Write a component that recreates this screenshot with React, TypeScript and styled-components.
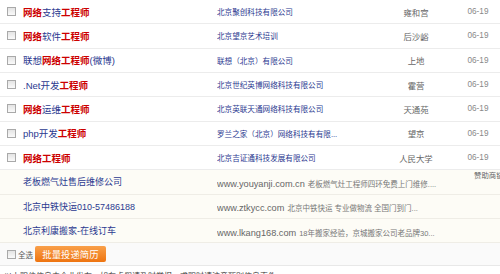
import React from 'react';
import styled, { createGlobalStyle } from 'styled-components';

type Part = { text: string; hot?: boolean };
type Job = { title: Part[]; company: string; area: string; date: string };
type Ad = { name: string; url: string; desc: string };

const jobs: Job[] = [
  { title: [{ text: '网络', hot: true }, { text: '支持' }, { text: '工程师', hot: true }], company: '北京聚创科技有限公司', area: '雍和宫', date: '06-19' },
  { title: [{ text: '网络', hot: true }, { text: '软件' }, { text: '工程师', hot: true }], company: '北京望京艺术培训', area: '后沙峪', date: '06-19' },
  { title: [{ text: '联想' }, { text: '网络工程师', hot: true }, { text: '(微博)' }], company: '联想（北京）有限公司', area: '上地', date: '06-19' },
  { title: [{ text: '.Net开发' }, { text: '工程师', hot: true }], company: '北京世纪英博网络科技有限公司', area: '霍营', date: '06-19' },
  { title: [{ text: '网络', hot: true }, { text: '运维' }, { text: '工程师', hot: true }], company: '北京英联天通网络科技有限公司', area: '天通苑', date: '06-19' },
  { title: [{ text: 'php开发' }, { text: '工程师', hot: true }], company: '罗兰之家（北京）网络科技有有限...', area: '望京', date: '06-19' },
  { title: [{ text: '网络工程师', hot: true }], company: '北京吉证通科技发展有限公司', area: '人民大学', date: '06-19' },
];

const ads: Ad[] = [
  { name: '老板燃气灶售后维修公司', url: 'www.youyanji.com.cn', desc: '老板燃气灶工程师四环免费上门维修....' },
  { name: '北京中铁快运010-57486188', url: 'www.ztkycc.com', desc: '北京中铁快运 专业做物流 全国门到门...' },
  { name: '北京利康搬家-在线订车', url: 'www.lkang168.com', desc: '18年搬家经验，京城搬家公司老品牌30...' },
];

const GlobalStyle = createGlobalStyle`
  html, body {
    margin: 0;
    padding: 0;
    background: #ffffff;
    overflow: hidden;
  }
  body {
    font-family: "Liberation Sans", "Noto Sans CJK SC", sans-serif;
  }
`;

const Page = styled.div`
  width: 500px;
  height: 274px;
  overflow: hidden;
`;

const JobRow = styled.div`
  display: grid;
  grid-template-columns: 23px 194px 160px 78px 45px;
  align-items: center;
  height: 23.33px;
  border-bottom: 1px solid #ececec;
`;

const Box = styled.span<{ $size: number }>`
  display: block;
  width: ${({ $size }) => $size}px;
  height: ${({ $size }) => $size}px;
  box-sizing: border-box;
  margin-left: 7px;
  border: 1px solid #a9a9a9;
  background: linear-gradient(#e4e4e4, #fafafa);
`;

const Title = styled.a`
  font-size: 9.5px;
  color: #2b3990;
  text-decoration: none;
  white-space: nowrap;
`;

const Hot = styled.span`
  color: #cc0000;
  font-weight: bold;
`;

const Company = styled.span`
  font-size: 7.6px;
  color: #2b3990;
  white-space: nowrap;
  overflow: hidden;
`;

const Area = styled.span`
  font-size: 8.4px;
  color: #666666;
  text-align: center;
`;

const Date = styled.span`
  font-size: 8.2px;
  color: #888888;
  text-align: center;
  padding-left: 1px;
`;

const AdList = styled.div`
  position: relative;
  background: #fdfcf6;
`;

const AdRow = styled.div`
  display: grid;
  grid-template-columns: 23px 194px 1fr;
  align-items: center;
  height: 23.33px;
  border-bottom: 1px solid #efede6;
`;

const AdName = styled.span`
  grid-column: 2;
  font-size: 9px;
  color: #2b3990;
  white-space: nowrap;
`;

const AdText = styled.span`
  white-space: nowrap;
  overflow: hidden;
`;

const AdUrl = styled.span`
  font-size: 9.2px;
  color: #666666;
  margin-right: 3px;
`;

const AdDesc = styled.span`
  font-size: 7.5px;
  color: #777777;
`;

const Sponsor = styled.span`
  position: absolute;
  top: -1px;
  left: 474px;
  font-size: 7.4px;
  color: #666666;
  white-space: nowrap;
`;

const Toolbar = styled.div`
  display: flex;
  align-items: center;
  height: 22px;
  background: #fafafa;
  border-bottom: 1px solid #e8e8e8;
`;

const SelectAll = styled.label`
  display: flex;
  align-items: center;
  gap: 2px;
  font-size: 7.5px;
  color: #555555;
`;

const Button = styled.button`
  margin-left: 2px;
  width: 71px;
  height: 16px;
  padding: 0;
  border: 0;
  border-radius: 2px;
  background: linear-gradient(#f9a04a, #ee7410);
  color: #ffffff;
  font-family: "Noto Sans CJK SC", sans-serif;
  font-size: 9.4px;
  line-height: 16px;
  cursor: pointer;
`;

const Note = styled.div`
  padding: 4px 0 0 4px;
  font-size: 8px;
  color: #333333;
  white-space: nowrap;
`;

export default function App() {
  return (
    <Page>
      <GlobalStyle />
      {jobs.map((job, i) => (
        <JobRow key={i}>
          <Box $size={9} />
          <Title href="#">
            {job.title.map((p, j) => (p.hot ? <Hot key={j}>{p.text}</Hot> : <span key={j}>{p.text}</span>))}
          </Title>
          <Company>{job.company}</Company>
          <Area>{job.area}</Area>
          <Date>{job.date}</Date>
        </JobRow>
      ))}
      <AdList>
        <Sponsor>赞助商链接</Sponsor>
        {ads.map((ad, i) => (
          <AdRow key={i}>
            <AdName>{ad.name}</AdName>
            <AdText>
              <AdUrl>{ad.url}</AdUrl>
              <AdDesc>{ad.desc}</AdDesc>
            </AdText>
          </AdRow>
        ))}
      </AdList>
      <Toolbar>
        <SelectAll>
          <Box $size={9} />
          全选
        </SelectAll>
        <Button type="button">批量投递简历</Button>
      </Toolbar>
      <Note>以上职位信息由企业发布，如有虚假请及时举报，求职时请注意甄别信息真伪。</Note>
    </Page>
  );
}
